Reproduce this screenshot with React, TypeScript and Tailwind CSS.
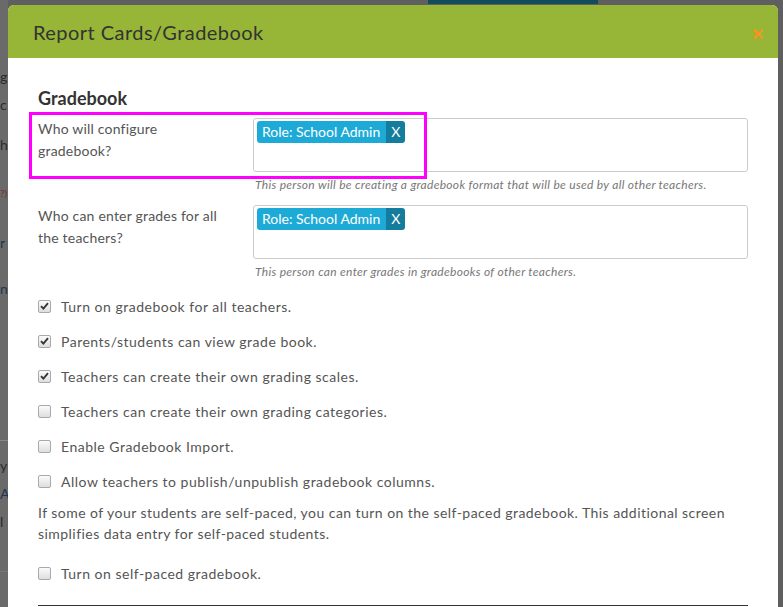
import React from 'react';

const checks = [
  { label: 'Turn on gradebook for all teachers.', checked: true },
  { label: 'Parents/students can view grade book.', checked: true },
  { label: 'Teachers can create their own grading scales.', checked: true },
  { label: 'Teachers can create their own grading categories.', checked: false },
  { label: 'Enable Gradebook Import.', checked: false },
  { label: 'Allow teachers to publish/unpublish gradebook columns.', checked: false },
];

function Box({ checked }: { checked: boolean }) {
  return (
    <span className="w-[13px] h-[13px] shrink-0 rounded-[2px] border border-[#a9a9a9] bg-gradient-to-b from-[#fbfbfb] to-[#dedede] flex items-center justify-center">
      {checked && (
        <svg width="9" height="8" viewBox="0 0 9 8">
          <path d="M1 4.2 L3.4 6.6 L8 1.2" fill="none" stroke="#333" strokeWidth="1.8" />
        </svg>
      )}
    </span>
  );
}

function Tag() {
  return (
    <span className="flex h-[22px] rounded-[3px] overflow-hidden text-[14px] text-white leading-[22px]">
      <span className="bg-[#1eaad6] pl-[5px] pr-[6px]">Role: School Admin</span>
      <span className="bg-[#147c9c] px-[5px]">X</span>
    </span>
  );
}

function Field({ label, help }: { label: React.ReactNode; help: string }) {
  return (
    <div className="grid grid-cols-[215px_1fr]">
      <div className="text-[14px] leading-[22px] tracking-[0.2px] text-[#555]">{label}</div>
      <div>
        <div className="h-[54px] border border-[#ccc] rounded-[3px] px-[3px] pt-[2px] flex items-start">
          <Tag />
        </div>
        <p className="italic text-[12px] tracking-[0.3px] text-[#777] mt-[5px] pl-[2px] leading-[16px]">{help}</p>
      </div>
    </div>
  );
}

function CheckRow({ label, checked }: { label: string; checked: boolean }) {
  return (
    <label className="flex items-center gap-[10px] h-[20px] text-[14px] tracking-[0.5px] text-[#555]">
      <Box checked={checked} />
      {label}
    </label>
  );
}

export default function App() {
  return (
    <div className="relative h-[607px] overflow-hidden bg-[#5f5f5f] flex" style={{ fontFamily: 'Lato, "Open Sans", sans-serif' }}>
      {/* page behind the overlay: left column fragments */}
      <div className="w-[8px] shrink-0 bg-[#6a6a6a] flex flex-col text-[14px] text-[#2a2a2a] leading-none pt-[70px] gap-[14px] overflow-hidden">
        <span>g</span>
        <span>c</span>
        <span className="pt-[12px]">h</span>
        <span className="pt-[22px] text-[10px] text-[#7a2a2a]">?)</span>
        <span className="pt-[24px] text-[#1f3550]">r</span>
        <span className="pt-[18px] text-[#1f3550]">n</span>
        <span className="mt-[130px] h-px bg-[#888]" />
        <span className="pt-[4px]">y</span>
        <span className="text-[#1f3550]">A</span>
        <span>l</span>
        <span className="mt-[28px] h-px bg-[#777]" />
      </div>
      <div className="flex-1 flex justify-start pl-[420px]">
        <div className="w-[170px] h-[4px] bg-[#124b5c]" />
      </div>

      {/* modal */}
      <div className="absolute left-[8px] top-[5px] w-[770px] h-[650px] bg-white rounded-t-[6px] overflow-hidden">
        <div className="h-[53px] bg-[#97b637] flex items-center justify-between pl-[25px] pr-[14px]">
          <h2 className="text-[20px] tracking-[0.45px] text-[#333] pt-[1px]">Report Cards/Gradebook</h2>
          <span className="text-[#f7941d] text-[16px] font-bold leading-none pt-[4px]">✕</span>
        </div>

        <div className="px-[30px] pt-[28px]">
          <h3 className="text-[18px] font-bold text-[#333] leading-[24px]">Gradebook</h3>

          <div className="mt-[8px]">
            <Field
              label={<>Who will configure<br />gradebook?</>}
              help="This person will be creating a gradebook format that will be used by all other teachers."
            />
          </div>
          <div className="mt-[12px]">
            <Field
              label={<>Who can enter grades for all<br />the teachers?</>}
              help="This person can enter grades in gradebooks of other teachers."
            />
          </div>

          <div className="mt-[16px] flex flex-col gap-[15px]">
            {checks.map((c) => (
              <CheckRow key={c.label} label={c.label} checked={c.checked} />
            ))}
          </div>

          <p className="mt-[11px] text-[14px] leading-[21px] tracking-[0.45px] text-[#555]">
            If some of your students are self-paced, you can turn on the self-paced gradebook. This additional screen simplifies data entry for self-paced students.
          </p>

          <div className="mt-[19px]">
            <CheckRow label="Turn on self-paced gradebook." checked={false} />
          </div>

          <div className="mt-[22px] h-px bg-[#333]" />
        </div>
      </div>

      {/* annotation */}
      <div className="absolute left-[29px] top-[112px] w-[398px] h-[67px] border-[3px] border-[#ff00ff]" />
    </div>
  );
}
